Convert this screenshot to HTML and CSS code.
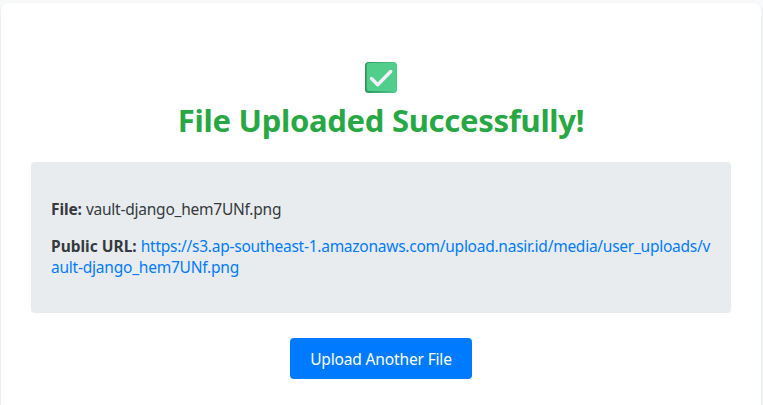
FILE: index.html
```html
<!DOCTYPE html>
<html lang="en">
<head>
<meta charset="utf-8">
<title>File Uploaded</title>
<link rel="stylesheet" href="styles.css">
</head>
<body>
<main class="card">
  <h1 class="title">
    <svg class="check" viewBox="0 0 32 31" aria-hidden="true">
      <defs>
        <linearGradient id="edge" x1="0" y1="0" x2="1" y2="0">
          <stop offset="0" stop-color="#2f9560"/>
          <stop offset="1" stop-color="#4fcb88"/>
        </linearGradient>
      </defs>
      <rect width="32" height="31" rx="3.5" fill="url(#edge)"/>
      <rect x="1.7" y="1" width="29.6" height="28" rx="2.5" fill="#50ce8a"/>
      <path d="M6.5 16.5l6.2 6.2L25.7 9.5" fill="none" stroke="#f5f0f8" stroke-width="3.4" stroke-linecap="round" stroke-linejoin="round"/>
    </svg>
    <span class="title-text">File Uploaded Successfully!</span>
  </h1>
  <section class="info">
    <p class="row"><strong class="label label-file">File:</strong> <span class="name">vault-django_hem7UNf.png</span></p>
    <p class="row"><strong class="label label-url">Public URL:</strong> <a class="link" href="#"><span class="link-first">https://s3.ap-southeast-1.amazonaws.com/upload.nasir.id/media/user_uploads/v</span><br><span class="link-last">ault-django_hem7UNf.png</span></a></p>
  </section>
  <a class="button" href="#">Upload Another File</a>
</main>
</body>
</html>
```
FILE: styles.css
```css
* { box-sizing: border-box; }
body {
  margin: 0;
  height: 405px;
  overflow: hidden;
  background: #f8f9fa;
  color: #343a40;
  font: 15.5px/21px "Noto Sans", sans-serif;
}
.card {
  display: flex;
  flex-direction: column;
  align-items: center;
  height: 402px;
  margin: 3px 2px 0 1px;
  padding: 59px 30px 0;
  background: #fff;
  border-radius: 8px 8px 0 0;
  box-shadow: 0 4px 6px rgba(0, 0, 0, .1);
}
.title {
  display: flex;
  flex-direction: column;
  align-items: center;
  margin: 0 0 20px;
  color: #28a745;
  font-size: 31px;
  line-height: 43px;
  letter-spacing: -.28px;
}
.check { width: 32px; height: 31px; margin-bottom: 6px; }
.info {
  width: 100%;
  height: 151px;
  padding: 37px 20px 0;
  background: #e9ecef;
  border-radius: 4px;
}
.row { margin: 0 0 16px; white-space: nowrap; }
.label-file { letter-spacing: -.1px; }
.name { letter-spacing: -.235px; }
.link { letter-spacing: -.255px; }
.link-last { letter-spacing: -.22px; }
.link { color: #007bff; text-decoration: none; }
.button {
  width: 182px;
  height: 41px;
  margin-top: 25px;
  border-radius: 4px;
  background: #007bff;
  color: #fff;
  line-height: 42px;
  letter-spacing: -.15px;
  text-align: center;
  text-decoration: none;
}
```
